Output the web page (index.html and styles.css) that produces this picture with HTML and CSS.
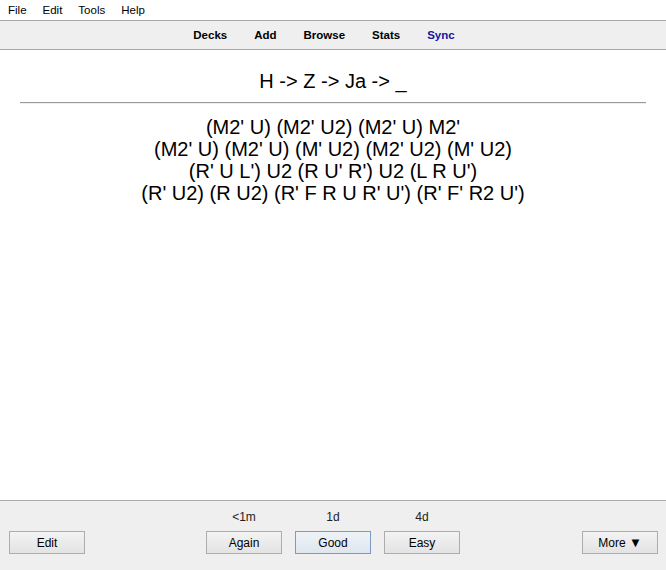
FILE: index.html
```html
<!DOCTYPE html>
<html>
<head>
<meta charset="utf-8">
<link rel="stylesheet" href="styles.css">
</head>
<body>
<div class="app">
  <div class="menubar">
    <span class="menu-item">File</span>
    <span class="menu-item">Edit</span>
    <span class="menu-item">Tools</span>
    <span class="menu-item">Help</span>
  </div>
  <div class="toolbar">
    <span class="tb-link">Decks</span>
    <span class="tb-link">Add</span>
    <span class="tb-link">Browse</span>
    <span class="tb-link">Stats</span>
    <span class="tb-link sync">Sync</span>
  </div>
  <div class="card">
    <div class="question">H -&gt; Z -&gt; Ja -&gt; _</div>
    <hr class="answer-rule">
    <div class="answer">
      <div>(M2' U) (M2' U2) (M2' U) M2'</div>
      <div>(M2' U) (M2' U) (M' U2) (M2' U2) (M' U2)</div>
      <div>(R' U L') U2 (R U' R') U2 (L R U')</div>
      <div>(R' U2) (R U2) (R' F R U R' U') (R' F' R2 U')</div>
    </div>
  </div>
  <div class="bottombar">
    <div class="side left">
      <button class="btn">Edit</button>
    </div>
    <div class="answers">
      <div class="ans">
        <span class="ivl">&lt;1m</span>
        <button class="btn">Again</button>
      </div>
      <div class="ans">
        <span class="ivl">1d</span>
        <button class="btn focus">Good</button>
      </div>
      <div class="ans">
        <span class="ivl">4d</span>
        <button class="btn">Easy</button>
      </div>
    </div>
    <div class="side right">
      <button class="btn">More <span class="tri">&#9660;</span></button>
    </div>
  </div>
</div>
</body>
</html>
```

FILE: styles.css
```css
html, body {
  margin: 0;
  padding: 0;
  background: #ffffff;
}

.app {
  width: 666px;
  height: 570px;
  display: flex;
  flex-direction: column;
  font-family: "Liberation Sans", Arial, sans-serif;
  overflow: hidden;
}

.menubar {
  height: 20px;
  display: flex;
  align-items: center;
  background: #ffffff;
  font-size: 11.5px;
  color: #000;
  padding-top: 1px;
  box-sizing: border-box;
}

.menu-item {
  padding: 0 8px;
  line-height: 19px;
}

.toolbar {
  height: 28px;
  background: #efefef;
  border-top: 1px solid #a8a8a8;
  border-bottom: 1px solid #a8a8a8;
  display: flex;
  justify-content: center;
  align-items: center;
  gap: 27px;
  font-size: 11.5px;
  font-weight: bold;
  color: #000;
  padding-right: 18px;
}

.tb-link.sync {
  color: #1515a0;
}

.card {
  flex: 1;
  padding: 20px 20px 0 20px;
  font-size: 20px;
  text-align: center;
  color: #000;
}

.question {
  line-height: 23px;
}

.answer-rule {
  margin: 9px 0 12px 0;
  border: 0;
  border-top: 1px solid #9a9a9a;
  border-bottom: 1px solid #eeeeee;
  height: 0;
}

.answer {
  line-height: 22px;
}

.bottombar {
  background: #efefef;
  border-top: 1px solid #aaaaaa;
  display: grid;
  grid-template-columns: 1fr auto 1fr;
  align-items: end;
  padding: 0 8px 16px 9px;
  box-sizing: border-box;
  height: 70px;
}

.side.right {
  display: flex;
  justify-content: flex-end;
}

.answers {
  display: flex;
  gap: 13px;
  padding-right: 1px;
}

.ans {
  display: flex;
  flex-direction: column;
  align-items: center;
  gap: 7px;
}

.ivl {
  font-size: 12px;
  line-height: 14px;
  color: #222;
}

.btn {
  width: 76px;
  height: 23px;
  margin: 0;
  padding: 0;
  border: 1px solid #adadad;
  background: linear-gradient(#f3f3f3, #e3e3e3);
  font-family: "Liberation Sans", Arial, sans-serif;
  font-size: 12px;
  color: #000;
  box-sizing: border-box;
}

.btn.focus {
  border-color: #7a9cc4;
  background: linear-gradient(#eef3f8, #dfe6ee);
}

.tri {
  font-size: 13px;
}
```
